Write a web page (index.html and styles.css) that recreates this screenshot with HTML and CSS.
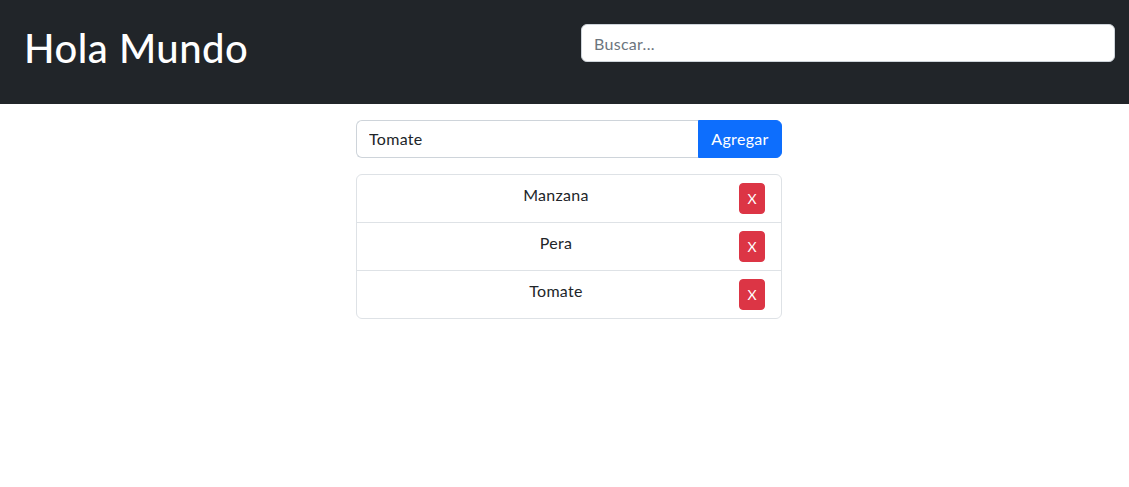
FILE: index.html
```html
<!DOCTYPE html>
<html lang="es">
<head>
<meta charset="utf-8">
<title>Hola Mundo</title>
<link rel="stylesheet" href="styles.css">
</head>
<body>
<header class="navbar">
  <h1 class="brand">Hola Mundo</h1>
  <input class="search" type="text" placeholder="Buscar...">
</header>
<main class="main">
  <div class="panel">
    <form class="add-form">
      <input class="add-input" type="text" value="Tomate">
      <button class="btn-add" type="button">Agregar</button>
    </form>
    <ul class="list">
      <li class="item"><span class="item-text">Manzana</span><button class="btn-del" type="button">X</button></li>
      <li class="item"><span class="item-text">Pera</span><button class="btn-del" type="button">X</button></li>
      <li class="item"><span class="item-text">Tomate</span><button class="btn-del" type="button">X</button></li>
    </ul>
  </div>
</main>
</body>
</html>
```
FILE: styles.css
```css
* { box-sizing: border-box; }
html, body { margin: 0; padding: 0; }
body {
  font-family: Lato, "Liberation Sans", sans-serif;
  font-size: 16px;
  line-height: 1.5;
  letter-spacing: 0.3px;
  color: #212529;
  background: #fff;
}
.navbar {
  background: #212529;
  padding: 24px 14px 24px 24px;
  display: flex;
  justify-content: space-between;
  align-items: flex-start;
}
.brand {
  margin: 0 0 8px 0;
  font-size: 40px;
  font-weight: 500;
  line-height: 48px;
  letter-spacing: 0.5px;
  color: #fff;
}
.search {
  width: 534px;
  height: 38px;
  padding: 6px 12px;
  font: inherit;
  letter-spacing: inherit;
  color: #212529;
  background: #fff;
  border: 1px solid #ced4da;
  border-radius: 6px;
  outline: none;
}
.search::placeholder { color: #6c757d; }
.main {
  display: flex;
  justify-content: center;
  padding: 16px 0 0 9px;
}
.panel { width: 426px; }
.add-form {
  display: flex;
  margin: 0 0 16px 0;
}
.add-input {
  flex: 1;
  min-width: 0;
  height: 38px;
  padding: 5px 12px 7px;
  font: inherit;
  letter-spacing: inherit;
  color: #212529;
  border: 1px solid #ced4da;
  border-right: 0;
  border-radius: 6px 0 0 6px;
  outline: none;
}
.btn-add {
  width: 84px;
  height: 38px;
  padding: 6px 10px;
  font: inherit;
  letter-spacing: inherit;
  color: #fff;
  background: #0d6efd;
  border: 1px solid #0d6efd;
  border-radius: 0 6px 6px 0;
}
.list {
  list-style: none;
  margin: 0;
  padding: 0;
  border: 1px solid #dee2e6;
  border-radius: 6px;
}
.item {
  display: flex;
  align-items: flex-start;
  padding: 8px 16px;
  border-top: 1px solid #dee2e6;
}
.item:first-child { border-top: 0; }
.item-text {
  flex: 1;
  text-align: center;
  line-height: 24px;
}
.btn-del {
  width: 26px;
  height: 31px;
  padding: 4px 0;
  font-family: inherit;
  font-size: 14px;
  line-height: 21px;
  color: #fff;
  background: #dc3545;
  border: 1px solid #dc3545;
  border-radius: 4px;
}
```
